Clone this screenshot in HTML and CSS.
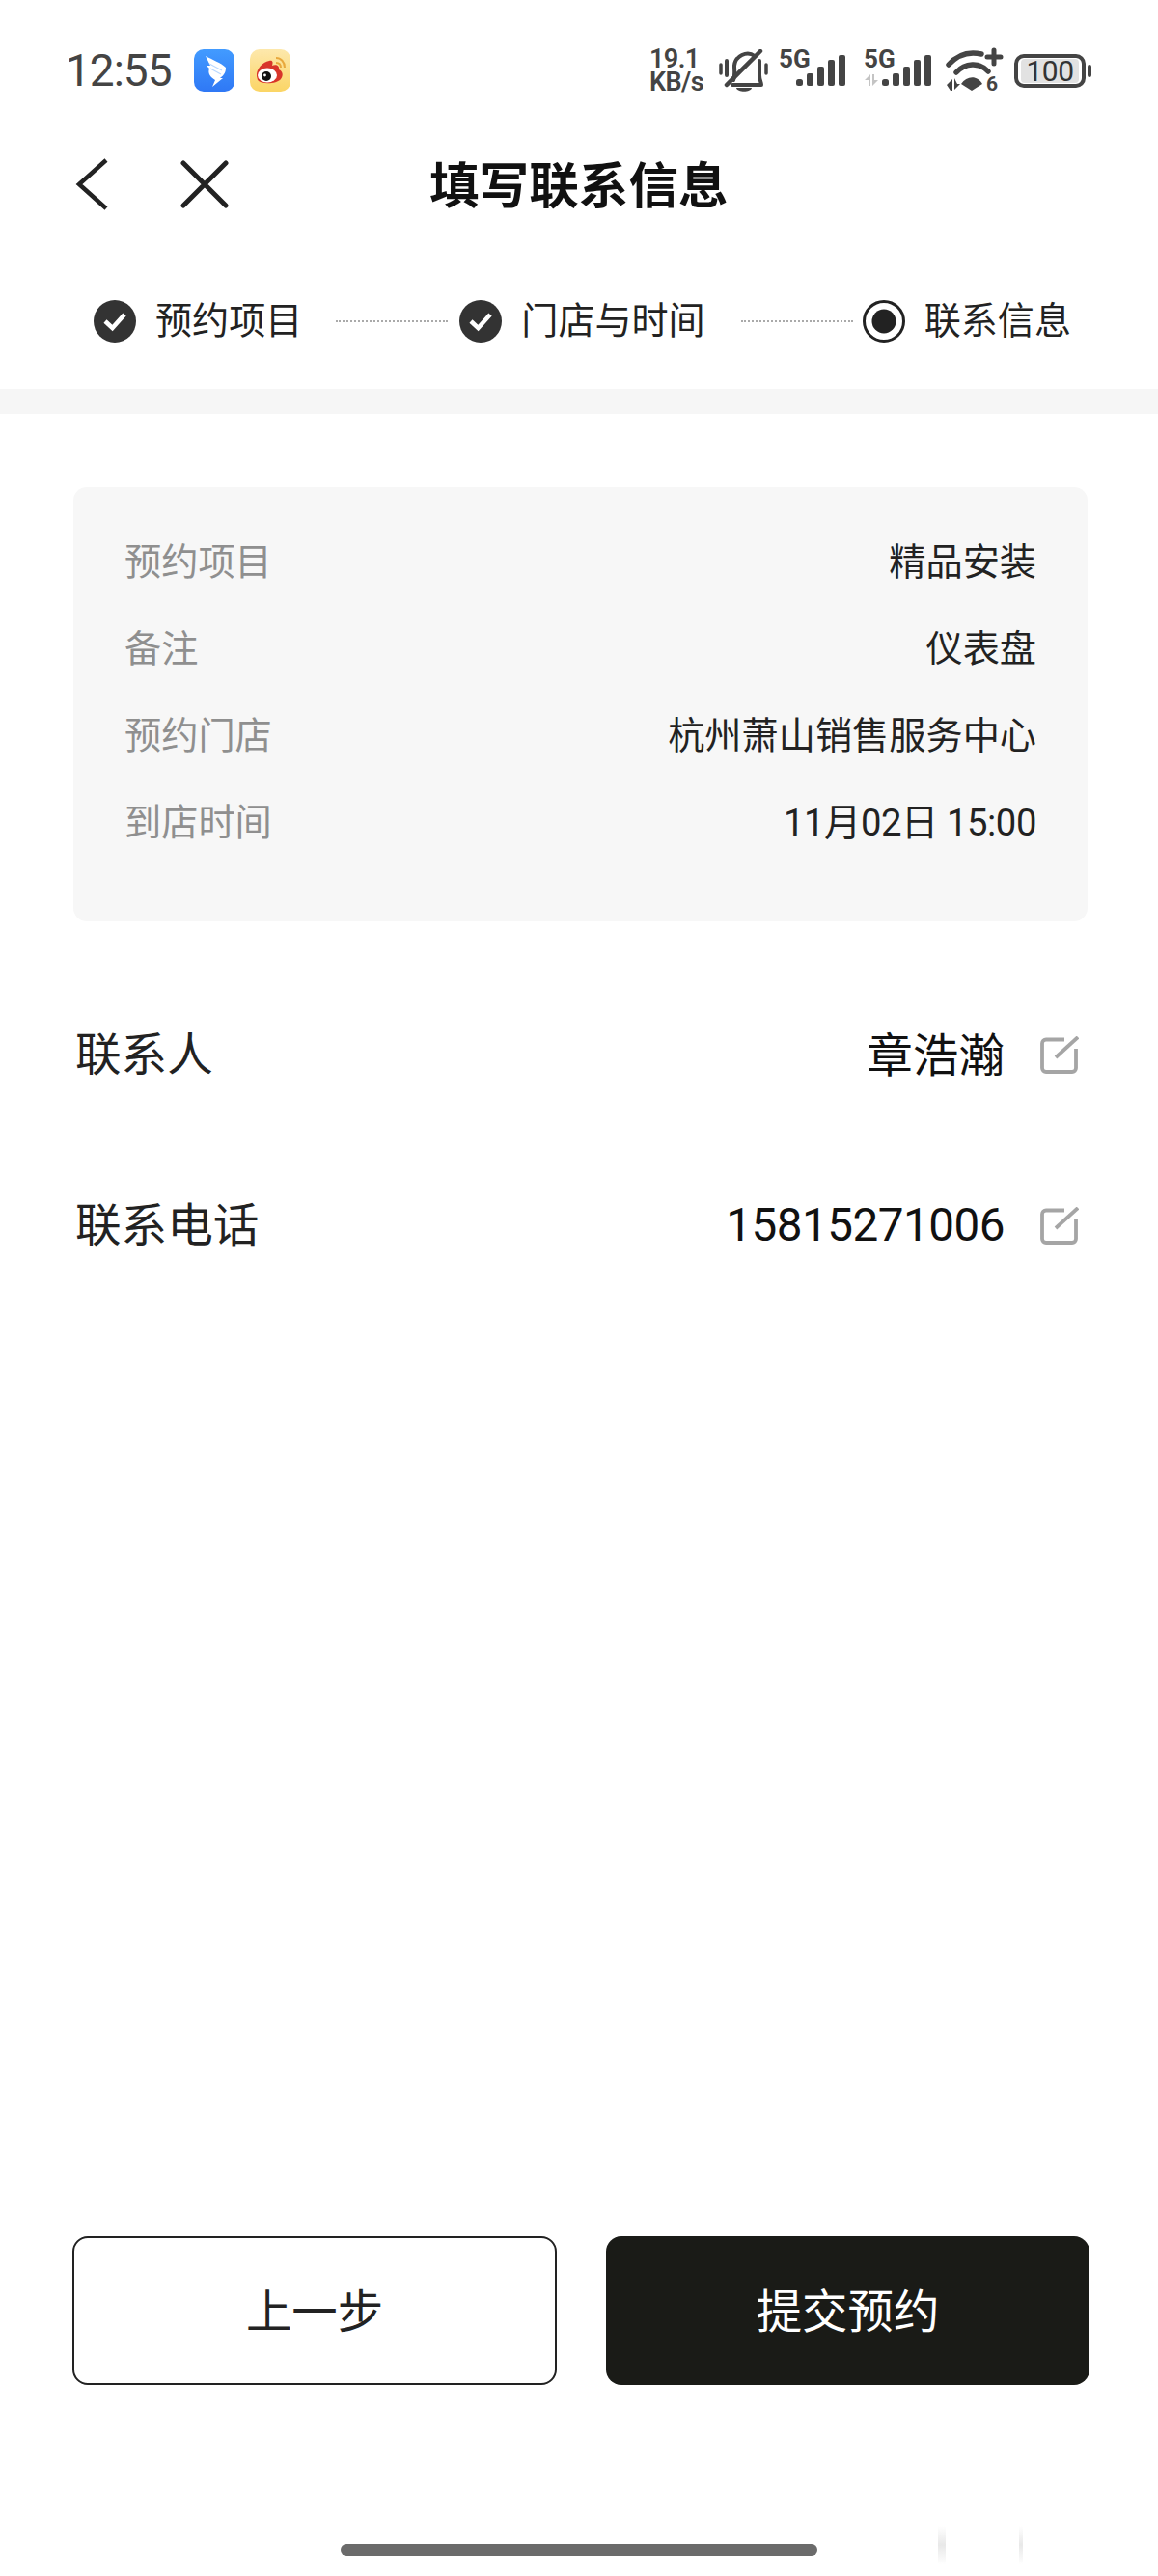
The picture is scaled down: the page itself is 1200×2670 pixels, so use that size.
FILE: index.html
```html
<!DOCTYPE html>
<html lang="zh">
<head>
<meta charset="utf-8">
<title>填写联系信息</title>
<link rel="stylesheet" href="styles.css">
</head>
<body>
<div class="page">
  <header class="status">
    <span class="time">12:55</span>
    <svg class="app app-first" viewBox="0 0 42 44"><defs><linearGradient id="dt" x1="0" y1="0" x2="0" y2="1"><stop offset="0" stop-color="#429bff"/><stop offset="1" stop-color="#2f78f5"/></linearGradient></defs><rect width="42" height="44" rx="10" fill="url(#dt)"/><path d="M12 7C19 11 28 14 33 19C33 24 31 27 27 30L30 30L19 39L22 32C17 29 14 25 16 20L13 17L17 17Z" fill="#fff"/><path d="M16 15L29 22M17 20L28 26" stroke="#b9d8ff" stroke-width="1.2"/></svg>
    <svg class="app" viewBox="0 0 42 44"><defs><linearGradient id="wb" x1="0" y1="0" x2="0" y2="1"><stop offset="0" stop-color="#fde8ac"/><stop offset="1" stop-color="#fbd565"/></linearGradient></defs><rect width="42" height="44" rx="10" fill="url(#wb)"/><path d="M7 28C6 21 13 13 20 12C24 11 24 14 23 17C27 15 31 17 30 21C34 23 35 27 32 31C28 36 12 37 8 32Z" fill="#d8352a"/><ellipse cx="18" cy="27" rx="10" ry="7.5" fill="#fff"/><circle cx="17" cy="28" r="5" fill="#111"/><circle cx="15.5" cy="27" r="1.4" fill="#fff"/><path d="M27 9C32 9 36 13 36 19M27 14C30 14 32 16 32 19" fill="none" stroke="#e8a83c" stroke-width="2"/></svg>
    <div class="status-right">
      <div class="speed"><span>19.1</span><span>KB/s</span></div>
      <svg class="ic-bell" viewBox="0 0 51 44"><g fill="none" stroke="#444" stroke-linecap="round" stroke-linejoin="round"><path d="M2 16V25M49 16V25" stroke-width="3.500"/><path d="M8 12V27M42 12V27C42 32 44 34 44 37H14" stroke-width="4"/><path d="M15 32C17 28 16 22 16 17C17 7 29 1 37 7" stroke-width="4"/><path d="M43 2L8 37" stroke-width="4.500"/></g><path d="M18 40H34C33 45 19 45 18 40Z" fill="#444"/></svg>
      <svg class="ic-sig" viewBox="0 -6 72 56"><text class="sig-text" x="0" y="19">5G</text><g fill="#444"><rect x="18" y="31" width="7" height="7" rx="2.5"/><rect x="29" y="25" width="7" height="13" rx="2"/><rect x="40" y="18" width="7" height="20" rx="2"/><rect x="51" y="11" width="7" height="27" rx="2"/><rect x="62" y="6" width="7" height="32" rx="2"/></g></svg>
      <svg class="ic-sig2" viewBox="0 -6 74 56"><text class="sig-text" x="2" y="19">5G</text><path d="M3 32L9 26V38H7V32ZM11 26V38L17 32H13V26Z" fill="#c4c4c4"/><g fill="#444"><rect x="21" y="31" width="7" height="7" rx="2.5"/><rect x="32" y="25" width="7" height="13" rx="2"/><rect x="43" y="18" width="7" height="20" rx="2"/><rect x="54" y="11" width="7" height="27" rx="2"/><rect x="65" y="6" width="7" height="32" rx="2"/></g></svg>
      <svg class="ic-wifi" viewBox="0 -6 60 56"><g fill="none" stroke="#444" stroke-linecap="round"><path d="M3 16C12 6 24 2 37 5" stroke-width="5.500"/><path d="M11 24C20 14 35 13 44 23" stroke-width="5.500"/><path d="M43 8H57M50 1V15" stroke-width="5"/></g><path d="M16 36C22 27 33 27 38 36L27 43Z" fill="#444"/><path d="M1 37L7 31V43H5ZM9 30V42L15 36H12Z" fill="#444"/><text class="wifi-six" x="42" y="43">6</text></svg>
      <div class="battery"><div class="battery-body"><span class="battery-fill">100</span></div><span class="battery-tip"></span></div>
    </div>
  </header>

  <nav class="nav">
    <svg class="nav-back" viewBox="0 0 34 54"><path d="M32 2L4 27L32 52" fill="none" stroke="#222" stroke-width="4.500"/></svg>
    <svg class="nav-close" viewBox="0 0 50 50"><path d="M3 3L47 47M47 3L3 47" fill="none" stroke="#222" stroke-width="5" stroke-linecap="round"/></svg>
    <h1 class="nav-title">填写联系信息</h1>
  </nav>

  <section class="steps">
    <svg class="step-ic" viewBox="0 0 44 44"><circle cx="22" cy="22" r="22" fill="#333"/><path d="M12 22L19.5 29L32 15" fill="none" stroke="#fff" stroke-width="4.5"/></svg>
    <span class="step-label">预约项目</span>
    <span class="step-line line-a"></span>
    <svg class="step-ic step-b" viewBox="0 0 44 44"><circle cx="22" cy="22" r="22" fill="#333"/><path d="M12 22L19.5 29L32 15" fill="none" stroke="#fff" stroke-width="4.5"/></svg>
    <span class="step-label">门店与时间</span>
    <span class="step-line line-b"></span>
    <svg class="step-ic step-c" viewBox="0 0 44 44"><circle cx="22" cy="22" r="20.5" fill="#fff" stroke="#222" stroke-width="3"/><circle cx="22" cy="22" r="12.5" fill="#222"/></svg>
    <span class="step-label">联系信息</span>
  </section>

  <div class="band"></div>

  <section class="card">
    <div class="card-row"><span class="card-key">预约项目</span><span class="card-val">精品安装</span></div>
    <div class="card-row"><span class="card-key">备注</span><span class="card-val">仪表盘</span></div>
    <div class="card-row"><span class="card-key">预约门店</span><span class="card-val">杭州萧山销售服务中心</span></div>
    <div class="card-row"><span class="card-key">到店时间</span><span class="card-val card-num">11月02日 15:00</span></div>
  </section>

  <section class="form">
    <div class="form-row">
      <span class="form-key">联系人</span>
      <span class="form-val form-name">章浩瀚</span>
      <svg class="edit" viewBox="0 0 41 40"><path d="M26 3.5H7A4 4 0 0 0 3 7.500V33A4 4 0 0 0 7 37H34A4 4 0 0 0 38 33V13" fill="none" stroke="#a5a5a5" stroke-width="3.800"/><path d="M40 1L17 22" fill="none" stroke="#a5a5a5" stroke-width="3.800"/></svg>
    </div>
    <div class="form-row">
      <span class="form-key">联系电话</span>
      <span class="form-val form-num">15815271006</span>
      <svg class="edit" viewBox="0 0 41 40"><path d="M26 3.5H7A4 4 0 0 0 3 7.500V33A4 4 0 0 0 7 37H34A4 4 0 0 0 38 33V13" fill="none" stroke="#a5a5a5" stroke-width="3.800"/><path d="M40 1L17 22" fill="none" stroke="#a5a5a5" stroke-width="3.800"/></svg>
    </div>
  </section>

  <footer class="actions">
    <button class="btn btn-ghost" type="button">上一步</button>
    <button class="btn btn-solid" type="button">提交预约</button>
  </footer>

  <div class="home-area"><span class="home-bar"></span></div>
  <span class="ghost ghost-a"></span>
  <span class="ghost ghost-b"></span>
</div>
</body>
</html>
```

FILE: styles.css
```css
* { box-sizing: border-box; }
html, body { margin: 0; padding: 0; background: #fff; }
body { font-family: "Roboto", "Noto Sans CJK SC", sans-serif; color: #222; }
.page { position: relative; width: 1200px; height: 2670px; display: flex; flex-direction: column; overflow: hidden; background: #fff; }

.status { height: 146px; display: flex; align-items: center; padding: 0 69px 0 68px; flex: none; }
.time { font-size: 46px; letter-spacing: -1px; color: #444; line-height: 1; width: 111px; }
.app { width: 42px; height: 44px; margin-left: 16px; }
.app-first { margin-left: 22px; }
.status-right { margin-left: auto; display: flex; align-items: center; }
.speed { display: flex; flex-direction: column; width: 60px; font-size: 27px; font-weight: 600; line-height: 24px; color: #444; letter-spacing: -0.6px; }
.ic-bell { width: 51px; height: 44px; margin-left: 12px; }
.ic-sig { width: 72px; height: 56px; margin-left: 11px; }
.ic-sig2 { width: 74px; height: 56px; margin-left: 14px; }
.ic-wifi { width: 60px; height: 56px; margin-left: 13px; }
.sig-text { font-family: "Roboto", sans-serif; font-size: 26px; font-weight: 700; fill: #444; }
.wifi-six { font-family: "Roboto", sans-serif; font-size: 21px; font-weight: 700; fill: #444; }
.battery { display: flex; align-items: center; margin-left: 11px; width: 80px; }
.battery-body { width: 74px; height: 35px; border: 4px solid #444; border-radius: 10px; padding: 1px 3px; display: flex; }
.battery-fill { flex: 1; background: #e2e2e2; border-radius: 4px; font-size: 30px; line-height: 25px; text-align: center; color: #333; font-weight: 400; letter-spacing: -0.5px; }
.battery-tip { width: 4px; height: 13px; background: #444; border-radius: 2px; margin-left: 2px; }

.nav { height: 90px; display: flex; align-items: center; padding-left: 78px; position: relative; flex: none; }
.nav-back { width: 34px; height: 54px; }
.nav-close { width: 50px; height: 50px; margin-left: 75px; }
.nav-title { margin: 6px 0 0 208px; font-size: 51.6px; font-weight: 700; line-height: 1; color: #111; white-space: nowrap; }

.steps { height: 167px; padding: 27px 0 0 97px; display: flex; align-items: center; flex: none; }
.step-ic { width: 44px; height: 44px; flex: none; }
.step-label { margin-left: 20px; font-size: 38.1px; line-height: 1; white-space: nowrap; color: #222; }
.step-line { width: 116px; border-top: 2px dotted #aaa; flex: none; }
.line-a { margin-left: 35px; }
.line-b { margin-left: 37px; }
.step-b { margin-left: 12px; }
.step-c { margin-left: 10px; }

.band { height: 26px; background: #f6f6f6; flex: none; }

.card { margin: 76px 73px 0 76px; padding: 29px 53px 61px; height: 450px; background: #f7f7f7; border-radius: 14px; flex: none; }
.card-row { height: 90px; display: flex; justify-content: space-between; align-items: center; font-size: 38.2px; }
.card-key { color: #8f8f8f; }
.card-val { color: #222; }
.card-num { letter-spacing: -0.4px; }

.form { margin-top: 49px; padding: 0 82px 0 78px; flex: none; }
.form-row { height: 177px; display: flex; align-items: center; font-size: 47.6px; color: #222; }
.form-key { flex: 1; margin-bottom: 6px; }
.form-val { color: #111; }
.form-name { margin-bottom: 4px; }
.form-num { letter-spacing: -0.5px; }
.edit { width: 41px; height: 40px; margin: 2px 0 0 36px; flex: none; }

.actions { margin-top: auto; padding: 0 71px 0 75px; display: flex; gap: 51px; flex: none; }
.btn { height: 154px; border-radius: 16px; font-family: inherit; font-size: 47.4px; padding: 0 0 6px; }
.btn-ghost { flex: 500; background: #fff; border: 2px solid #222; color: #222; }
.btn-solid { flex: 503; background: #1a1b17; border: 0; color: #fff; }

.home-area { height: 198px; padding-top: 165px; display: flex; justify-content: center; flex: none; }
.home-bar { width: 494px; height: 12px; border-radius: 6px; background: #6b6b6b; }
.ghost { position: absolute; top: 2618px; width: 8px; height: 40px; background: linear-gradient(to bottom, #fff, #e8e8e8, #fff); }
.ghost-a { left: 972px; }
.ghost-b { left: 1056px; width: 4px; }
```
